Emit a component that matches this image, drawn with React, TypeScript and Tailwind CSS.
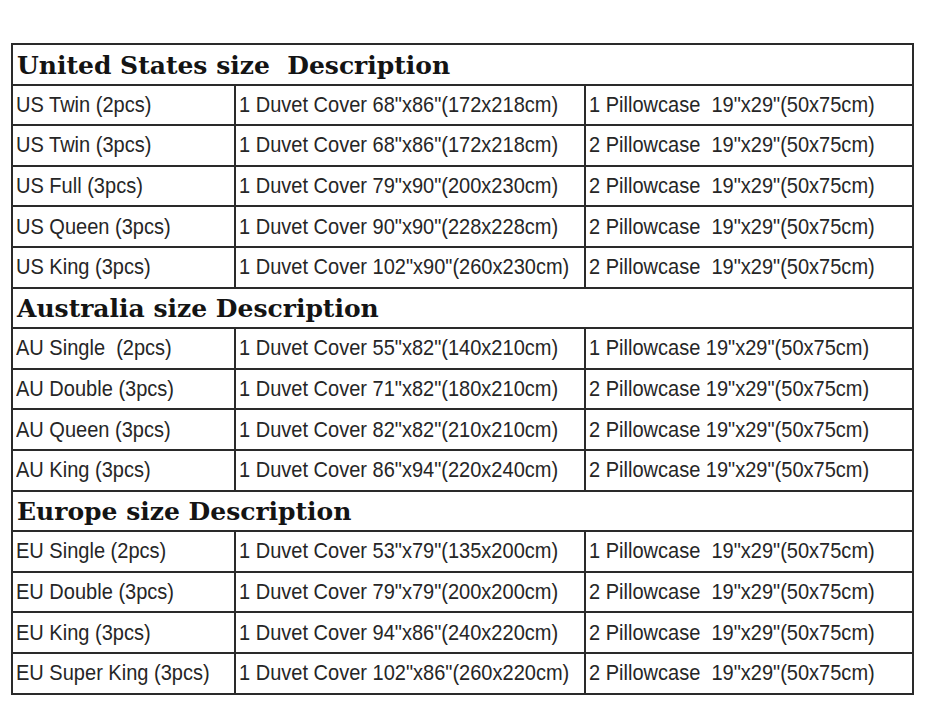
const sections = [
  {
    title: "United States size  Description",
    rows: [
      ["US Twin (2pcs)", '1 Duvet Cover 68"x86"(172x218cm)', '1 Pillowcase  19"x29"(50x75cm)'],
      ["US Twin (3pcs)", '1 Duvet Cover 68"x86"(172x218cm)', '2 Pillowcase  19"x29"(50x75cm)'],
      ["US Full (3pcs)", '1 Duvet Cover 79"x90"(200x230cm)', '2 Pillowcase  19"x29"(50x75cm)'],
      ["US Queen (3pcs)", '1 Duvet Cover 90"x90"(228x228cm)', '2 Pillowcase  19"x29"(50x75cm)'],
      ["US King (3pcs)", '1 Duvet Cover 102"x90"(260x230cm)', '2 Pillowcase  19"x29"(50x75cm)'],
    ],
  },
  {
    title: "Australia size Description",
    rows: [
      ["AU Single  (2pcs)", '1 Duvet Cover 55"x82"(140x210cm)', '1 Pillowcase 19"x29"(50x75cm)'],
      ["AU Double (3pcs)", '1 Duvet Cover 71"x82"(180x210cm)', '2 Pillowcase 19"x29"(50x75cm)'],
      ["AU Queen (3pcs)", '1 Duvet Cover 82"x82"(210x210cm)', '2 Pillowcase 19"x29"(50x75cm)'],
      ["AU King (3pcs)", '1 Duvet Cover 86"x94"(220x240cm)', '2 Pillowcase 19"x29"(50x75cm)'],
    ],
  },
  {
    title: "Europe size Description",
    rows: [
      ["EU Single (2pcs)", '1 Duvet Cover 53"x79"(135x200cm)', '1 Pillowcase  19"x29"(50x75cm)'],
      ["EU Double (3pcs)", '1 Duvet Cover 79"x79"(200x200cm)', '2 Pillowcase  19"x29"(50x75cm)'],
      ["EU King (3pcs)", '1 Duvet Cover 94"x86"(240x220cm)', '2 Pillowcase  19"x29"(50x75cm)'],
      ["EU Super King (3pcs)", '1 Duvet Cover 102"x86"(260x220cm)', '2 Pillowcase  19"x29"(50x75cm)'],
    ],
  },
];

export default function App() {
  return (
    <div className="w-[926px] h-[714px] bg-white pt-[43px] pl-[11px]">
      <table className="w-[901px] table-fixed border-collapse border-2 border-[#2a2a2a]">
        <colgroup>
          <col className="w-[223px]" />
          <col className="w-[350px]" />
          <col className="w-[328px]" />
        </colgroup>
        <tbody>
          {sections.map((s) => (
            <>
              <tr key={s.title} className="h-[40.6px]">
                <td
                  colSpan={3}
                  className="border-2 border-[#2a2a2a] px-[4px] py-0 whitespace-pre text-[25px] font-bold leading-none text-[#141414] [font-family:'DejaVu_Serif',serif]"
                >
                  <span className="inline-block translate-y-[1px]">{s.title}</span>
                </td>
              </tr>
              {s.rows.map((r) => (
                <tr key={r[0]} className="h-[40.6px]">
                  {r.map((c, i) => (
                    <td
                      key={i}
                      className="border-2 border-[#2a2a2a] px-[3px] py-0 whitespace-pre text-[22px] leading-none text-[#262626] [font-family:'Liberation_Sans',Arial,sans-serif]"
                    >
                      <span className="inline-block origin-left scale-x-[0.91]">{c}</span>
                    </td>
                  ))}
                </tr>
              ))}
            </>
          ))}
        </tbody>
      </table>
    </div>
  );
}
